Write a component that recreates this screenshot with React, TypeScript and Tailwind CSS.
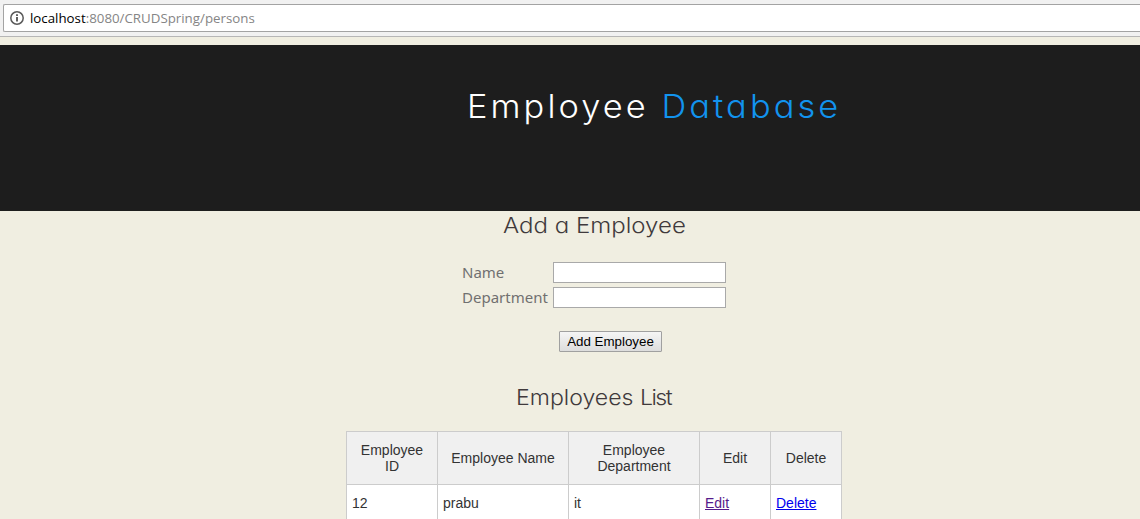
import React from "react";

const columns = ["Employee ID", "Employee Name", "Employee Department", "Edit", "Delete"];
const people = [{ id: 12, name: "prabu", department: "it" }];

function AddressBar() {
  return (
    <div className="h-[37px] border-b border-[#b6b6b6] bg-[#f1f1f1] pt-1 pl-[3px]">
      <div className="flex h-[28px] items-center rounded-l-[2px] border border-r-0 border-[#a3a3a3] bg-white pl-[6px]">
        <svg width="14" height="14" viewBox="0 0 14 14" fill="none" stroke="#5a5a5a">
          <circle cx="7" cy="7" r="6.2" strokeWidth="1.5" />
          <path d="M7 6v4.4M7 3.2v1.8" strokeWidth="1.9" />
        </svg>
        <span className="ml-[6px] font-['Open_Sans',sans-serif] text-[13.3px] leading-5 whitespace-nowrap text-[#858585]">
          <span className="text-black">localhost</span>:8080/CRUDSpring/persons
        </span>
      </div>
    </div>
  );
}

function Field({ label }: { label: string }) {
  return (
    <label className="flex h-[21px] items-center">
      <span className="w-[91px] font-['Noto_Sans',sans-serif] text-[15px] whitespace-nowrap text-[#707070]">
        {label}
      </span>
      <input className="h-[21px] w-[173px] border border-[#a9a9a9] bg-white px-1 outline-none" />
    </label>
  );
}

export default function App() {
  return (
    <div className="h-[519px] overflow-hidden bg-[#f0eee1] font-['Liberation_Sans',sans-serif]">
      <AddressBar />
      <header className="mt-2 h-[166px] bg-[#1d1d1d] pt-[41px] pl-[467px]">
        <h1 className="w-max origin-left scale-x-[1.058] font-['Inter',sans-serif] text-[32.5px] leading-[42px] font-light tracking-[2.9px] whitespace-nowrap text-white [font-feature-settings:'cv11']">
          Employee <span className="text-[#1293ee]">Database</span>
        </h1>
      </header>
      <main>
        <h2 className="ml-[503px] h-[30px] w-max origin-left scale-x-[1.092] font-['Inter',sans-serif] text-[22px] leading-[29px] font-light whitespace-nowrap text-[#403a3c] [font-feature-settings:'cv11']">
          Add a Employee
        </h2>
        <form className="mt-[21px] flex flex-col gap-1 pl-[462px]">
          <Field label="Name" />
          <Field label="Department" />
          <button
            type="button"
            className="mt-[19px] ml-[97px] h-[21px] w-[103px] rounded-[1px] border border-[#a0a0a0] bg-linear-to-b from-[#f5f5f5] to-[#dddddd] text-[13.33px] leading-[19px] whitespace-nowrap text-black"
          >
            Add Employee
          </button>
        </form>
        <h2 className="mt-[31px] ml-[516px] h-[30px] w-max origin-left scale-x-[1.05] font-['Inter',sans-serif] text-[22px] leading-[29px] font-light whitespace-nowrap text-[#403a3c] [font-feature-settings:'cv11']">
          Employees <span className="tracking-[-1.5px]">List</span>
        </h2>
        <table className="mt-[18px] ml-[346px] w-[496px] table-fixed border-collapse text-[14px] leading-4 text-[#333]">
          <colgroup>
            <col className="w-[91px]" />
            <col className="w-[131px]" />
            <col className="w-[131px]" />
            <col className="w-[71px]" />
            <col className="w-[71px]" />
          </colgroup>
          <thead>
            <tr className="h-[53px] bg-[#f0f0f0]">
              {columns.map((c) => (
                <th key={c} className="border border-[#ccc] px-[5px] font-normal">
                  {c}
                </th>
              ))}
            </tr>
          </thead>
          <tbody>
            {people.map((p) => (
              <tr key={p.id} className="h-[37px] bg-white">
                <td className="border border-[#ccc] px-[5px]">{p.id}</td>
                <td className="border border-[#ccc] px-[5px]">{p.name}</td>
                <td className="border border-[#ccc] px-[5px]">{p.department}</td>
                <td className="border border-[#ccc] px-[5px]">
                  <a href="#" className="text-[#551a8b] underline">Edit</a>
                </td>
                <td className="border border-[#ccc] px-[5px]">
                  <a href="#" className="text-[#0000ee] underline">Delete</a>
                </td>
              </tr>
            ))}
          </tbody>
        </table>
      </main>
    </div>
  );
}
